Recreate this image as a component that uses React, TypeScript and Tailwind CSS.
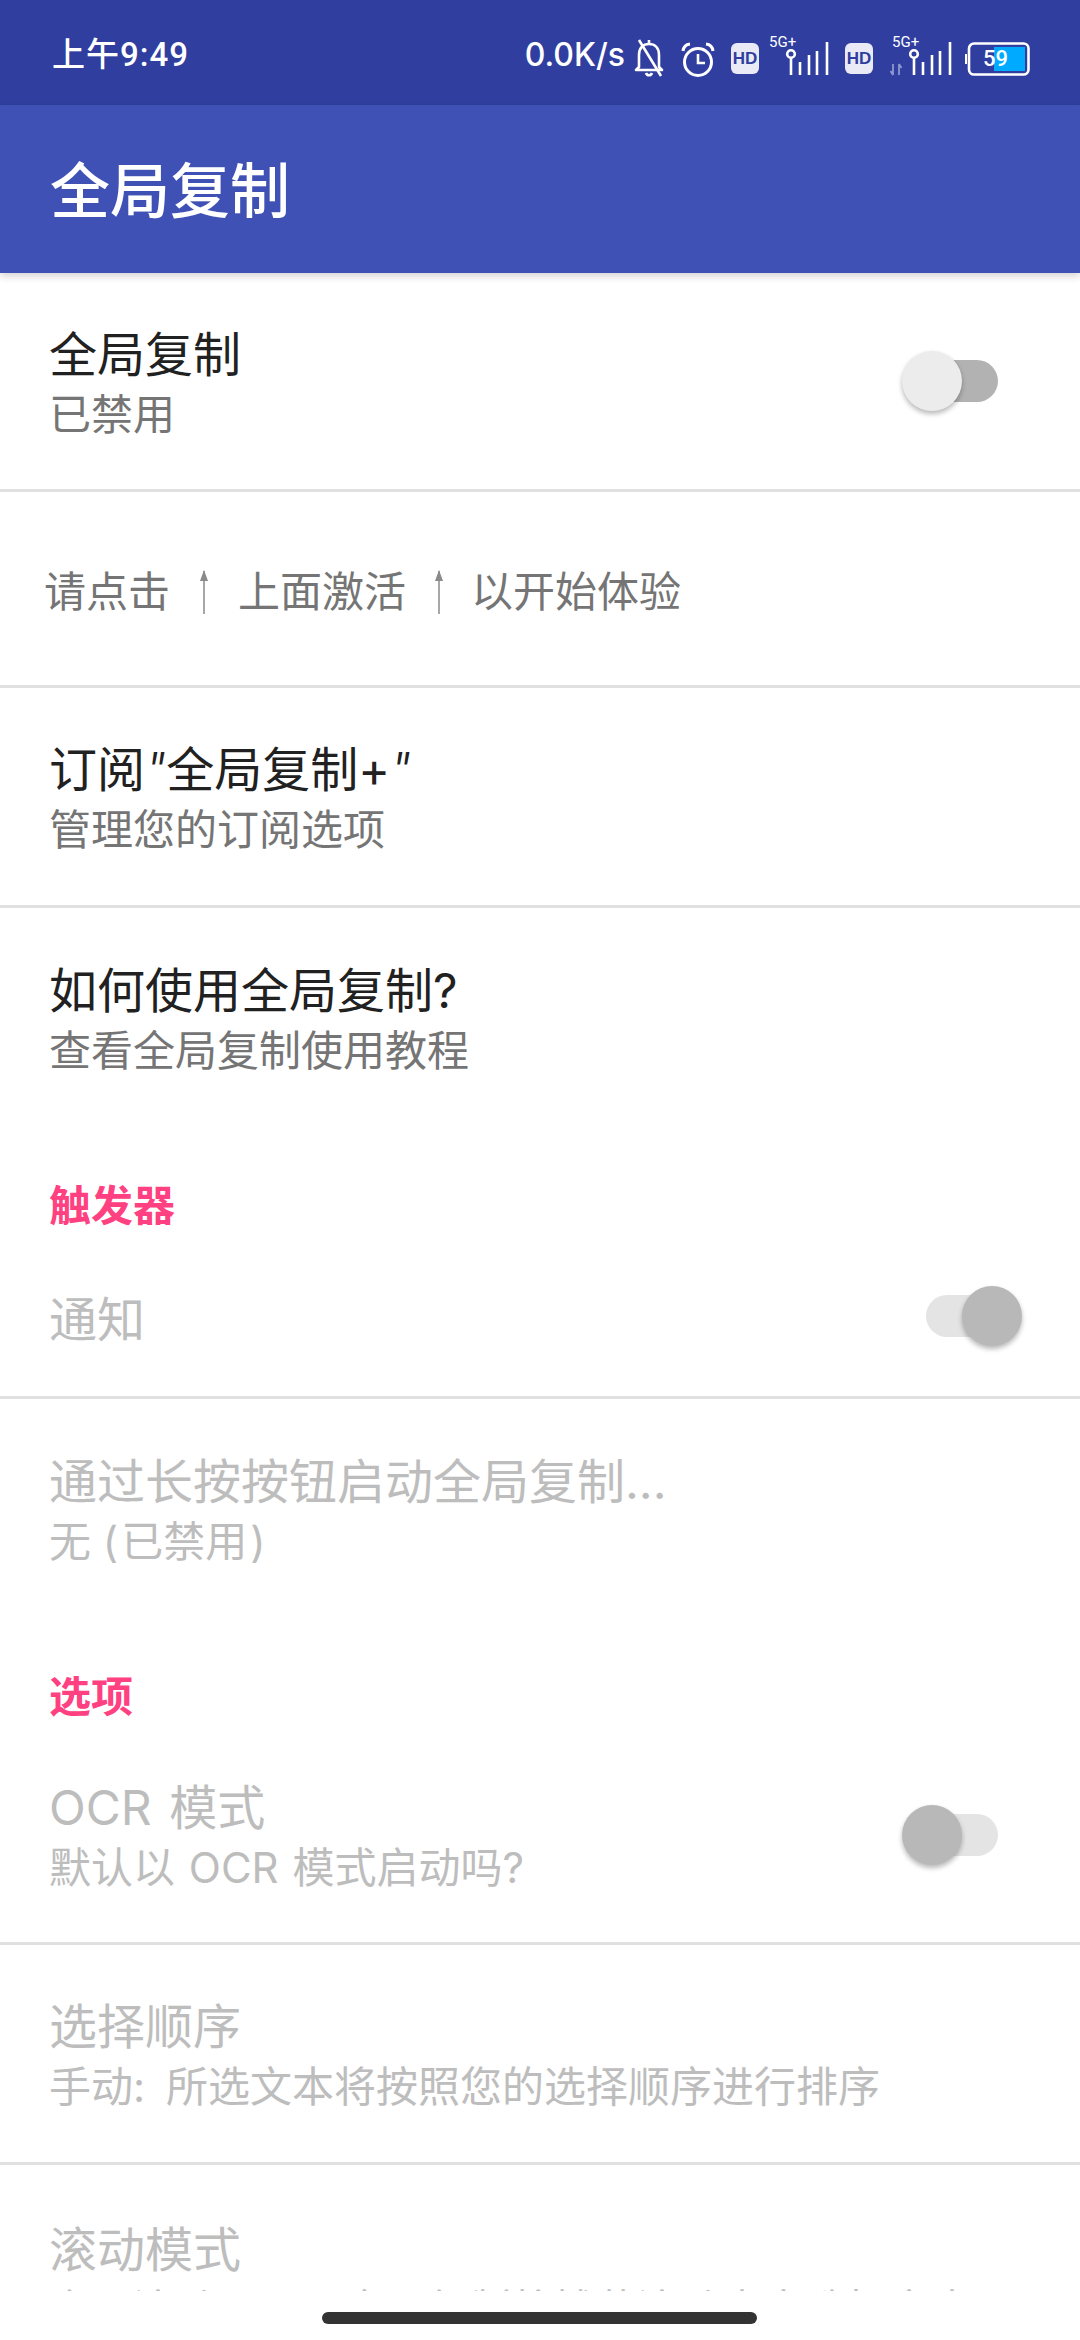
import React from 'react';

const font = { fontFamily: 'Inter, "Noto Sans CJK SC", "Noto Sans", sans-serif' };

const BellOff = () => (
  <svg width="31" height="40" viewBox="0 0 31 40" fill="none" stroke="white" strokeWidth="2.6" className="ml-[9px] mt-[5px]">
    <path d="M5 29V17C5 10 9 6 15 6C21 6 25 10 25 17V29L28 32H2L5 29Z" strokeLinejoin="round" />
    <path d="M12 35C13 38 17 38 18 35" />
    <path d="M15 2V6" />
    <path d="M5 2L27 38" />
  </svg>
);

const Alarm = () => (
  <svg width="34" height="36" viewBox="0 0 34 36" fill="none" stroke="white" strokeWidth="3" className="ml-[16px] mt-[9px]">
    <circle cx="17" cy="20" r="13.5" />
    <path d="M17 12V21H24" strokeWidth="2.6" />
    <path d="M2 9C2.5 5 5 2.5 9 2" />
    <path d="M32 9C31.5 5 29 2.5 25 2" />
  </svg>
);

const Hd = ({ className }: { className: string }) => (
  <div className={`w-[28px] h-[31px] mt-[7px] rounded-[6px] bg-[#e9eaf5] flex items-center justify-center text-[#2f3e9e] text-[17px] font-bold leading-none ${className}`} style={{ fontFamily: '"Liberation Sans", sans-serif' }}>
    HD
  </div>
);

const Signal = ({ arrows, className }: { arrows?: boolean; className: string }) => (
  <div className={`relative w-[62px] h-[40px] mt-[2px] ${className}`}>
    <span className="absolute left-[2px] top-[-1px] text-white text-[15px] leading-[15px]" style={{ fontFamily: 'Roboto, sans-serif' }}>5G+</span>
    <svg width="62" height="40" viewBox="0 0 62 40" fill="none" stroke="white" strokeWidth="2.6" className="absolute left-0 top-0">
      <circle cx="24" cy="18" r="3.8" />
      <path d="M24 22V39M33 26V39M42 19V39M50 15V39M60 6V39" />
      {arrows && <path d="M3 28V39M3 39L0.5 35M9 39V28M9 28L11.5 32" stroke="#8d97cf" strokeWidth="1.8" />}
    </svg>
  </div>
);

const Battery = () => (
  <div className="relative ml-[13px] mt-[7px] w-[65px] h-[34px]">
    <svg width="65" height="34" viewBox="0 0 65 34" fill="none" className="absolute inset-0">
      <rect x="29" y="5" width="31" height="24" fill="#00aaff" />
      <rect x="4" y="1.5" width="59.5" height="31" rx="5" stroke="white" strokeWidth="2.6" />
      <path d="M1 12V22" stroke="white" strokeWidth="2" />
    </svg>
    <span className="absolute left-[18px] top-0 text-white text-[22px] leading-[34px] font-medium" style={{ fontFamily: 'Roboto, sans-serif' }}>59</span>
  </div>
);

const StatusBar = () => (
  <div className="h-[105px] bg-[#303f9f] flex items-center pt-[5px] pl-[52px] pr-[50px] text-white">
    <span className="text-[33px] font-medium tracking-[1px]" style={{ fontFamily: 'Roboto, "Noto Sans CJK SC", sans-serif' }}>上午9:49</span>
    <div className="ml-auto flex items-center">
      <span className="text-[32px] font-medium" style={{ fontFamily: 'Inter, sans-serif' }}>0.0K/s</span>
      <BellOff />
      <Alarm />
      <Hd className="ml-[16px]" />
      <Signal className="ml-[8px]" />
      <Hd className="ml-[16px]" />
      <Signal arrows className="ml-[17px]" />
      <Battery />
    </div>
  </div>
);

const Toggle = ({ on, disabled }: { on: boolean; disabled?: boolean }) => (
  <div className={`relative w-[72px] h-[42px] rounded-full ${disabled ? 'bg-[#e4e4e4]' : 'bg-[#b2b2b2]'}`}>
    <div
      className={`absolute top-[-9px] w-[60px] h-[60px] rounded-full shadow-[0_3px_5px_rgba(0,0,0,0.28)] ${on ? 'right-[-24px]' : 'left-[-24px]'} ${disabled ? 'bg-[#b8b8b8]' : 'bg-[#ececec]'}`}
    />
  </div>
);

const Row = ({
  title,
  sub,
  disabled,
  height,
  divider = true,
  children,
}: {
  title: React.ReactNode;
  sub?: React.ReactNode;
  disabled?: boolean;
  height: string;
  divider?: boolean;
  children?: React.ReactNode;
}) => (
  <div className={`${height} flex items-center pl-[49px] pr-[82px] shrink-0 ${divider ? 'border-b-[3px] border-[#e0e0e0]' : ''}`}>
    <div className="flex-1 min-w-0 pt-[6px]">
      <div className={`text-[48px] leading-[61px] whitespace-nowrap ${disabled ? 'text-[#bdbdbd]' : 'text-[#212121]'}`}>{title}</div>
      {sub && <div className={`text-[42px] leading-[60px] whitespace-nowrap ${disabled ? 'text-[#bdbdbd]' : 'text-[#757575]'}`}>{sub}</div>}
    </div>
    {children}
  </div>
);

const SectionHeader = ({ label, className }: { label: string; className: string }) => (
  <div className={`pl-[49px] text-[42px] leading-[60px] font-semibold text-[#ff4081] ${className}`}>{label}</div>
);

const UpArrow = ({ className }: { className: string }) => (
  <svg width="20" height="46" viewBox="0 0 20 46" fill="none" stroke="#8a8a8a" strokeWidth="1.5" className={className}>
    <path d="M10 2V45" />
    <path d="M10 1L6 12H14Z" fill="#8a8a8a" stroke="none" />
  </svg>
);

export default function App() {
  return (
    <div className="relative w-[1080px] h-[2340px] bg-white overflow-hidden flex flex-col" style={font}>
      <StatusBar />
      <div className="h-[168px] shrink-0 bg-[#3f51b5] flex items-center pl-[50px] pt-[3px] text-white text-[60px] font-medium z-10 shadow-[0_3px_8px_rgba(0,0,0,0.18)]">
        全局复制
      </div>

      <div className="flex flex-col">
        <Row title="全局复制" sub="已禁用" height="h-[219px]">
          <Toggle on={false} />
        </Row>

        <div className="h-[196px] shrink-0 border-b-[3px] border-[#e0e0e0] flex items-center pl-[44px] pt-[6px] text-[42px] text-[#757575]">
          <span>请点击</span>
          <UpArrow className="mx-[24px]" />
          <span>上面激活</span>
          <UpArrow className="ml-[23px] mr-[22px]" />
          <span>以开始体验</span>
        </div>

        <Row
          title={<>订阅<span className="italic font-light">"</span>全局复制+<span className="italic font-light">"</span></>}
          sub="管理您的订阅选项"
          height="h-[220px]"
        />
        <Row title="如何使用全局复制?" sub="查看全局复制使用教程" height="h-[219px]" divider={false} />

        <SectionHeader label="触发器" className="mt-[49px]" />

        <Row title="通知" disabled height="h-[163px]">
          <Toggle on disabled />
        </Row>

        <Row
          title="通过长按按钮启动全局复制..."
          sub={<>无 (<span className="mx-[3px]">已禁用</span>)</>}
          disabled
          height="h-[219px]"
          divider={false}
        />

        <SectionHeader label="选项" className="mt-[49px]" />

        <Row
          title={<span className="[word-spacing:4px]">OCR 模式</span>}
          sub={<span className="[word-spacing:2px]">默认以 OCR 模式启动吗?</span>}
          disabled
          height="h-[218px]"
        >
          <Toggle on={false} disabled />
        </Row>

        <Row
          title="选择顺序"
          sub={<>手动:<span className="ml-[21px]">所选文本将按照您的选择顺序进行排序</span></>}
          disabled
          height="h-[220px]"
        />

        <div className="h-[126px] shrink-0 overflow-hidden pl-[49px] pt-[54px]">
          <div className="text-[48px] leading-[61px] text-[#bdbdbd] whitespace-nowrap">滚动模式</div>
          <div className="text-[42px] leading-[60px] text-[#bdbdbd] whitespace-nowrap">启用滚动页面，全局复制将捕获滚动内容选择文本</div>
        </div>
      </div>

      <div className="absolute left-[322px] top-[2312px] w-[435px] h-[12px] rounded-full bg-[#333333]" />
    </div>
  );
}
